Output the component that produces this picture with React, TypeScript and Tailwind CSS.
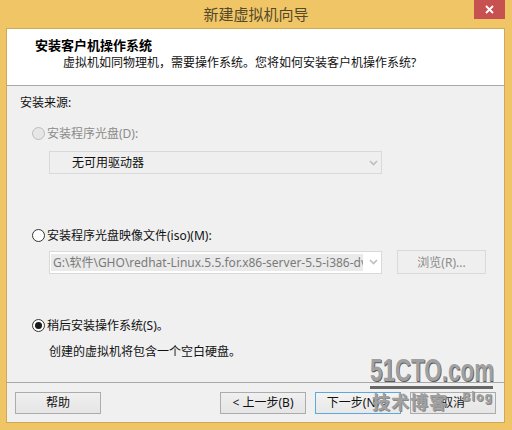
import React from "react";

const font = { fontFamily: '"Noto Sans", "Noto Sans CJK SC", sans-serif' };

function Radio({ on, disabled }: { on?: boolean; disabled?: boolean }) {
  return (
    <span
      className={`flex h-[13px] w-[13px] shrink-0 items-center justify-center rounded-full border ${
        disabled ? "border-[#bcbcbc] bg-[#e6e6e6]" : "border-[#333333] bg-white"
      }`}
    >
      {on && <span className="h-[7px] w-[7px] rounded-full bg-[#1a1a1a]" />}
    </span>
  );
}

function Chevron({ color }: { color: string }) {
  return (
    <svg width="9" height="6" viewBox="0 0 9 6" className="shrink-0">
      <path d="M1 1 L4.5 4.5 L8 1" fill="none" stroke={color} strokeWidth="1.6" />
    </svg>
  );
}

function Btn({ children, cls }: { children: React.ReactNode; cls?: string }) {
  return (
    <div
      className={`flex h-[22px] w-[86px] items-center justify-center border text-[12px] text-[#111111] ${
        cls ?? "border-[#acacac] bg-gradient-to-b from-[#f0f0f0] to-[#e5e5e5]"
      }`}
    >
      {children}
    </div>
  );
}

export default function App() {
  return (
    <div className="relative flex h-[430px] w-[512px] flex-col overflow-hidden bg-[#efc566]" style={font}>
      <div className="relative flex h-[28px] shrink-0 items-center justify-center">
        <span className="text-[15px] leading-none text-[#54492b]">新建虚拟机向导</span>
        <div className="absolute right-[7px] top-0 flex h-[19px] w-[31px] items-center justify-center bg-[#c75050]">
          <svg width="9" height="9" viewBox="0 0 9 9">
            <path d="M1 1 L8 8 M8 1 L1 8" stroke="#ffffff" strokeWidth="1.8" />
          </svg>
        </div>
      </div>

      <div className="ml-[6px] mr-[7px] flex h-[395px] flex-col border border-[#cfa957] bg-[#f0f0f0]">
        <div className="flex h-[57px] shrink-0 flex-col border-b border-[#a8a8a8] bg-white pl-[28px] pt-[7px]">
          <span className="text-[13px] font-bold leading-[18px] text-black">安装客户机操作系统</span>
          <span className="pl-[28px] text-[12px] leading-[17px] text-[#111111]">
            虚拟机如同物理机，需要操作系统。您将如何安装客户机操作系统?
          </span>
        </div>

        <div className="flex h-[297px] shrink-0 flex-col border-b border-[#a8a8a8] pl-[13px] pt-[8px] text-[12px] leading-[17px] text-[#111111]">
          <span>安装来源:</span>

          <div className="ml-[12px] mt-[14px] flex items-center gap-[2px] text-[#8b8b8b]">
            <Radio disabled />
            <span>安装程序光盘(D):</span>
          </div>
          <div className="ml-[29px] mt-[9px] flex h-[23px] w-[333px] items-center justify-between border border-[#d9d9d9] bg-[#efefef] pl-[22px] pr-[3px] text-[#111111]">
            <span>无可用驱动器</span>
            <Chevron color="#bdbdbd" />
          </div>

          <div className="ml-[12px] mt-[53px] flex items-center gap-[2px]">
            <Radio />
            <span>安装程序光盘映像文件(iso)(M):</span>
          </div>
          <div className="mt-[6px] flex items-center">
            <div className="ml-[29px] flex h-[23px] w-[333px] items-center justify-between border border-[#d9d9d9] bg-white pl-[1px] pr-[3px]">
              <span className="flex h-[17px] w-[312px] items-center overflow-hidden whitespace-nowrap bg-[#eaeaea] pl-[2px] text-[#7a7a7a]">
                G:\软件\GHO\redhat-Linux.5.5.for.x86-server-5.5-i386-dvd.iso
              </span>
              <Chevron color="#bdbdbd" />
            </div>
            <div className="ml-[15px] flex h-[24px] w-[89px] items-center justify-center border border-[#d9d9d9] bg-[#efefef] text-[#8b8b8b]">
              浏览(R)...
            </div>
          </div>

          <div className="ml-[12px] mt-[43px] flex items-center gap-[2px]">
            <Radio on />
            <span>稍后安装操作系统(S)。</span>
          </div>
          <span className="ml-[29px] mt-[9px]">创建的虚拟机将包含一个空白硬盘。</span>
        </div>

        <div className="flex flex-1 items-start pl-[8px] pt-[9px]">
          <Btn>帮助</Btn>
          <div className="ml-[119px] flex gap-[9px]">
            <Btn>&lt; 上一步(B)</Btn>
            <Btn cls="border-[#5fa8dc] bg-gradient-to-b from-[#f3f3f3] to-[#e8e8e8]">下一步(N) &gt;</Btn>
            <Btn>取消</Btn>
          </div>
        </div>
      </div>

      <div className="absolute left-[370px] top-[352px] flex w-[123px] flex-col text-[#a0a0a0]">
        <span
          className="h-[34px] origin-left scale-x-[0.7] whitespace-nowrap text-[32px] font-bold leading-[36px] [text-shadow:1px_1px_0_#5a5a5a]"
          style={{ fontFamily: '"Liberation Sans", sans-serif' }}
        >
          51CTO.com
        </span>
        <div className="h-[3px] bg-[#666666]" />
        <div className="mt-[1px] flex items-start justify-between">
          <span className="ml-[2px] text-[18px] font-bold leading-[24px] tracking-[1px] [text-shadow:1px_1px_0_#888888]">技术博客</span>
          <span className="text-[12px] font-bold leading-[13px] tracking-[1px] [text-shadow:1px_1px_0_#888888]">Blog</span>
        </div>
      </div>
    </div>
  );
}
